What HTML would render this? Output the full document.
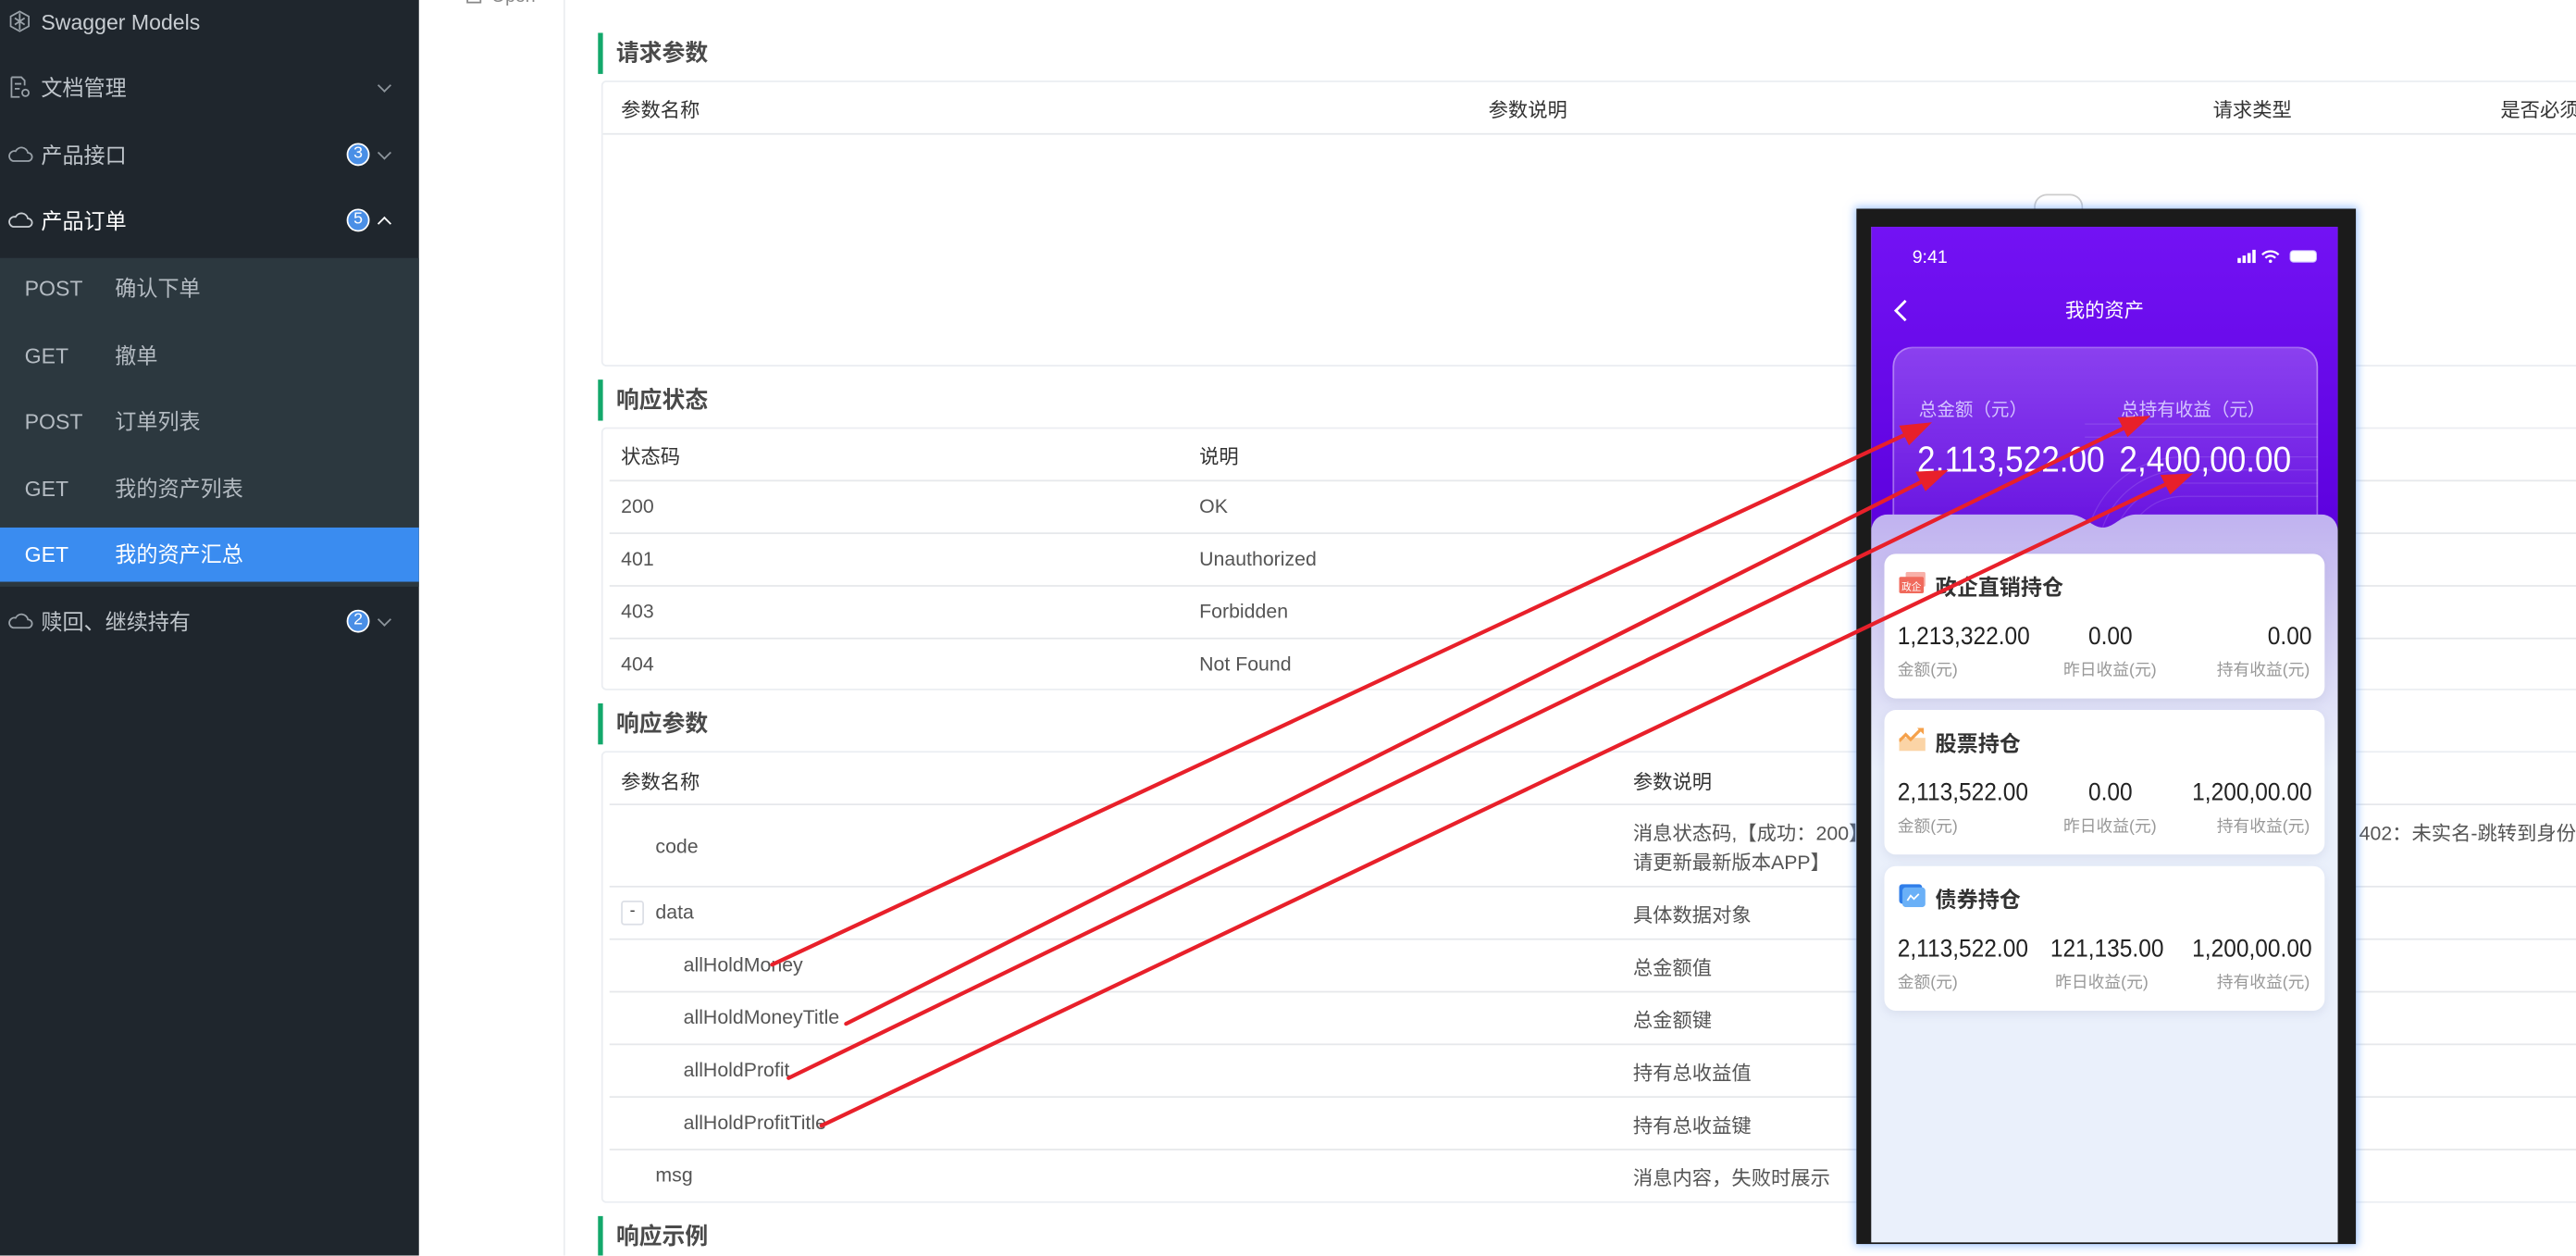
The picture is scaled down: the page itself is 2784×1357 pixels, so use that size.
<!DOCTYPE html>
<html><head><meta charset="utf-8"><style>
*{margin:0;padding:0;box-sizing:border-box}
html,body{width:2784px;height:1356px;overflow:hidden;background:#fff}
#w{position:absolute;left:0;top:0;width:1568px;height:764px;transform:scale(1.77551);transform-origin:0 0;overflow:hidden;font-family:"Liberation Sans","Noto Sans CJK SC",sans-serif;color:#555}
.a{position:absolute;white-space:nowrap}
.sb{position:absolute;left:0;top:0;width:255px;height:764px;background:#1f262d}
.sub{position:absolute;left:0;top:157px;width:255px;height:200px;background:#2c383f}
.mi{position:absolute;left:25px;font-size:13px;color:#bfc5cb;line-height:16px;margin-top:1px}
.m{position:absolute;left:15px;font-size:13px;color:#b4bbc2;line-height:16px;margin-top:1px}
.n{position:absolute;left:70px;font-size:13px;color:#b4bbc2;line-height:16px;margin-top:1px}
.badge{position:absolute;left:211px;width:14px;height:14px;border-radius:50%;background:#4a8fe6;border:1px solid #fff;color:#fff;font-size:10px;text-align:center;line-height:12px}
.chev{position:absolute;left:231px;width:6px;height:6px;border-right:1.3px solid #8d959c;border-bottom:1.3px solid #8d959c;transform:rotate(45deg)}
.ttl{position:absolute;left:364px;height:25px;border-left:3px solid #13a86b;padding-left:8px;font-size:14px;font-weight:bold;color:#4a4a4a;line-height:25px}
.tb{position:absolute;left:366px;width:1210px;border:1px solid #ebeef2;border-radius:3px;background:#fff}
.hl{position:absolute;left:371px;width:1200px;height:1px;background:#e6e8eb}
.t{position:absolute;font-size:12px;color:#555;white-space:nowrap}
.th{position:absolute;font-size:12px;color:#333;white-space:nowrap}
.card{position:absolute;left:1147px;width:268px;height:88px;background:#fff;border-radius:7px;box-shadow:0 2px 6px rgba(120,130,170,.15)}
.ct{position:absolute;left:31px;top:10px;font-size:13px;font-weight:bold;color:#333}
.v{position:absolute;top:42px;font-size:15px;color:#222;font-family:"Liberation Sans Narrow","Liberation Sans",sans-serif;transform:scaleX(.92)}
.l{position:absolute;top:62px;font-size:10px;color:#999}
</style></head><body><div id="w">

<div class="sb"></div>
<div class="sub"></div>
<div class="a" style="left:0;top:321px;width:255px;height:33px;background:#3a8cf0"></div>
<svg class="a" style="left:5px;top:6px" width="14" height="14" viewBox="0 0 14 14" fill="none" stroke="#9aa2a9" stroke-width="1"><polygon points="7,1 12.5,4 12.5,10 7,13 1.5,10 1.5,4"/><path d="M4 5l6 4M4 9l6-4M7 2v10"/></svg>
<div class="mi" style="top:5px;color:#c9ced3">Swagger Models</div>
<svg class="a" style="left:5px;top:46px" width="14" height="14" viewBox="0 0 14 14" fill="none" stroke="#9aa2a9" stroke-width="1"><path d="M2 1h6l2 2v3M2 1v12h5"/><path d="M4 5h4M4 8h3"/><circle cx="10.5" cy="10.5" r="2"/></svg>
<div class="mi" style="top:45px">文档管理</div>
<div class="chev" style="top:49px"></div>
<svg class="a" style="left:4px;top:88px" width="16" height="12" viewBox="0 0 16 12" fill="none" stroke="#9aa2a9" stroke-width="1"><path d="M4 10h9a2.5 2.5 0 0 0 0-5 4 4 0 0 0-7.5-1A3 3 0 0 0 4 10z"/></svg>
<div class="mi" style="top:86px">产品接口</div>
<div class="badge" style="top:87px">3</div>
<div class="chev" style="top:90px"></div>
<svg class="a" style="left:4px;top:128px" width="16" height="12" viewBox="0 0 16 12" fill="none" stroke="#c9ced3" stroke-width="1"><path d="M4 10h9a2.5 2.5 0 0 0 0-5 4 4 0 0 0-7.5-1A3 3 0 0 0 4 10z"/></svg>
<div class="mi" style="top:126px;color:#fff">产品订单</div>
<div class="badge" style="top:127px">5</div>
<div class="chev" style="top:133px;border-color:#fff;transform:rotate(225deg)"></div>
<div class="m" style="top:167px">POST</div><div class="n" style="top:167px">确认下单</div>
<div class="m" style="top:208px">GET</div><div class="n" style="top:208px">撤单</div>
<div class="m" style="top:248px">POST</div><div class="n" style="top:248px">订单列表</div>
<div class="m" style="top:289px">GET</div><div class="n" style="top:289px">我的资产列表</div>
<div class="m" style="top:329px;color:#fff">GET</div><div class="n" style="top:329px;color:#fff">我的资产汇总</div>
<svg class="a" style="left:4px;top:372px" width="16" height="12" viewBox="0 0 16 12" fill="none" stroke="#9aa2a9" stroke-width="1"><path d="M4 10h9a2.5 2.5 0 0 0 0-5 4 4 0 0 0-7.5-1A3 3 0 0 0 4 10z"/></svg>
<div class="mi" style="top:370px">赎回、继续持有</div>
<div class="badge" style="top:371px">2</div>
<div class="chev" style="top:374px"></div>

<div class="a" style="left:256px;top:0;width:88px;height:764px;border-right:1px solid #eceef0;background:#fff"></div>
<div class="a" style="left:284px;top:-8px;width:9px;height:10px;border:1px solid #888"></div>
<div class="a" style="left:299px;top:-8px;font-size:11px;color:#888">Open</div>

<div class="ttl" style="top:20px">请求参数</div>
<div class="tb" style="top:49px;height:174px"></div>
<div class="a" style="left:367px;top:81px;width:1209px;height:1px;background:#e6e8eb"></div>
<div class="th" style="left:378px;top:58px">参数名称</div>
<div class="th" style="left:906px;top:58px">参数说明</div>
<div class="th" style="left:1347px;top:58px">请求类型</div>
<div class="th" style="left:1522px;top:58px">是否必须</div>

<div class="ttl" style="top:231px">响应状态</div>
<div class="tb" style="top:260px;height:160px"></div>
<div class="hl" style="top:292px"></div><div class="hl" style="top:324px"></div><div class="hl" style="top:356px"></div><div class="hl" style="top:388px"></div>
<div class="th" style="left:378px;top:269px">状态码</div><div class="th" style="left:730px;top:269px">说明</div>
<div class="t" style="left:378px;top:301px">200</div><div class="t" style="left:730px;top:301px">OK</div>
<div class="t" style="left:378px;top:333px">401</div><div class="t" style="left:730px;top:333px">Unauthorized</div>
<div class="t" style="left:378px;top:365px">403</div><div class="t" style="left:730px;top:365px">Forbidden</div>
<div class="t" style="left:378px;top:397px">404</div><div class="t" style="left:730px;top:397px">Not Found</div>

<div class="ttl" style="top:428px">响应参数</div>
<div class="tb" style="top:457px;height:275px"></div>
<div class="hl" style="top:489px"></div><div class="hl" style="top:539px"></div><div class="hl" style="top:571px"></div><div class="hl" style="top:603px"></div><div class="hl" style="top:635px"></div><div class="hl" style="top:667px"></div><div class="hl" style="top:699px"></div>
<div class="th" style="left:378px;top:467px">参数名称</div><div class="th" style="left:994px;top:467px">参数说明</div>
<div class="t" style="left:399px;top:508px">code</div>
<div class="t" style="left:994px;top:498px">消息状态码,【成功：200】，【401：未登录】</div>
<div class="t" style="left:994px;top:516px">请更新最新版本APP】</div>
<div class="t" style="left:1436px;top:498px">402：未实名-跳转到身份证认证</div>
<div class="a" style="left:378px;top:548px;width:14px;height:15px;border:1px solid #dcdfe6;border-radius:2px;font-size:10px;text-align:center;line-height:12px;color:#333">-</div>
<div class="t" style="left:399px;top:548px">data</div><div class="t" style="left:994px;top:548px">具体数据对象</div>
<div class="t" style="left:416px;top:580px">allHoldMoney</div><div class="t" style="left:994px;top:580px">总金额值</div>
<div class="t" style="left:416px;top:612px">allHoldMoneyTitle</div><div class="t" style="left:994px;top:612px">总金额键</div>
<div class="t" style="left:416px;top:644px">allHoldProfit</div><div class="t" style="left:994px;top:644px">持有总收益值</div>
<div class="t" style="left:416px;top:676px">allHoldProfitTitle</div><div class="t" style="left:994px;top:676px">持有总收益键</div>
<div class="t" style="left:399px;top:708px">msg</div><div class="t" style="left:994px;top:708px">消息内容，失败时展示</div>
<div class="ttl" style="top:740px">响应示例</div>

<div class="a" style="left:1238px;top:118px;width:30px;height:10px;border:1px solid #ccc;border-bottom:none;border-radius:8px 8px 0 0"></div>
<div class="a" style="left:1130px;top:127px;width:304px;height:630px;background:#1b1b1b;box-shadow:0 0 5px 1px rgba(80,150,255,.55)"></div>
<div class="a" style="left:1139px;top:138px;width:284px;height:618px;background:#eaf0fb;overflow:hidden">
  <div class="a" style="left:0;top:0;width:284px;height:200px;background:linear-gradient(#7312f4,#5b00dc)"></div>
  <div class="a" style="left:25px;top:13px;font-size:11px;color:#fff">9:41</div>
  <svg class="a" style="left:222px;top:13px" width="52" height="10" viewBox="0 0 52 10"><rect x="1" y="6" width="2" height="3" fill="#fff"/><rect x="4" y="4.5" width="2" height="4.5" fill="#fff"/><rect x="7" y="3" width="2" height="6" fill="#fff"/><rect x="10" y="1" width="2" height="8" fill="#fff"/><path d="M16 4a7 7 0 0 1 10 0M18 6a4 4 0 0 1 6 0" stroke="#fff" stroke-width="1.3" fill="none"/><circle cx="21" cy="8" r="1" fill="#fff"/><rect x="33" y="1.5" width="16" height="7" rx="2" fill="#fff" stroke="#c9b6ff" stroke-width=".6"/></svg>
  <svg class="a" style="left:13px;top:44px" width="10" height="14" viewBox="0 0 10 14"><path d="M8 1L2 7l6 6" stroke="#fff" stroke-width="1.6" fill="none"/></svg>
  <div class="a" style="left:118px;top:42px;font-size:12px;color:#fff">我的资产</div>
  <div class="a" style="left:13px;top:73px;width:259px;height:130px;border-radius:12px;border:1px solid rgba(255,255,255,.35);background:linear-gradient(rgba(255,255,255,.22),rgba(255,255,255,.05))"></div>
  <svg class="a" style="left:130px;top:100px" width="142" height="100" viewBox="0 0 142 100" fill="none" stroke="rgba(255,255,255,.12)" stroke-width=".7"><path d="M0 100a60 60 0 0 1 60-60h82"/><path d="M8 100a52 52 0 0 1 52-52h82"/><path d="M16 100a44 44 0 0 1 44-44h82"/><path d="M24 100a36 36 0 0 1 36-36h82"/><path d="M0 20h142M0 28h142"/></svg>
  <div class="a" style="left:29px;top:103px;font-size:11px;color:#d4c3ff">总金额（元）</div>
  <div class="a" style="left:152px;top:103px;font-size:11px;color:#d4c3ff">总持有收益（元）</div>
  <div class="a" style="left:28px;top:129px;font-size:22px;color:#fff;font-family:'Liberation Sans Narrow','Liberation Sans',sans-serif;transform:scaleX(.9);transform-origin:0 0">2,113,522.00</div>
  <div class="a" style="left:151px;top:129px;font-size:22px;color:#fff;font-family:'Liberation Sans Narrow','Liberation Sans',sans-serif;transform:scaleX(.9);transform-origin:0 0">2,400,00.00</div>
  <svg class="a" style="left:0;top:175px" width="284" height="443" viewBox="0 0 284 443"><defs><linearGradient id="g" x1="0" y1="0" x2="0" y2="1"><stop offset="0" stop-color="#c0b2f0"/><stop offset=".15" stop-color="#d2cdf2"/><stop offset=".35" stop-color="#eaf0fb"/><stop offset="1" stop-color="#eaf0fb"/></linearGradient></defs><path d="M0 10a10 10 0 0 1 10-10h110c10 0 14 8 21 8s11-8 21-8h112a10 10 0 0 1 10 10v433H0z" fill="url(#g)"/></svg>
</div>

<div class="card" style="top:337px">
  <svg class="a" style="left:9px;top:11px" width="17" height="14" viewBox="0 0 17 14"><rect x="4" y="0" width="12" height="9" rx="1" fill="#f8b0a8"/><rect x="0" y="3" width="15" height="10" rx="1" fill="#f06a5c"/><text x="1.5" y="11" font-size="6" fill="#fff" font-family="Noto Sans CJK SC">政企</text></svg>
  <div class="ct">政企直销持仓</div>
  <div class="v" style="left:8px;transform-origin:0 0">1,213,322.00</div>
  <div class="v" style="left:123px">0.00</div>
  <div class="v" style="right:8px;transform-origin:100% 0">0.00</div>
  <div class="l" style="left:8px">金额(元)</div><div class="l" style="left:109px">昨日收益(元)</div><div class="l" style="right:9px">持有收益(元)</div>
</div>
<div class="card" style="top:432px">
  <svg class="a" style="left:9px;top:11px" width="16" height="14" viewBox="0 0 16 14"><rect x="0" y="6" width="16" height="8" fill="#fbd4a6"/><path d="M0 8l4-4 3 3 6-6" stroke="#f5a14b" stroke-width="1.8" fill="none"/><path d="M11 0h4v4z" fill="#f5a14b"/></svg>
  <div class="ct">股票持仓</div>
  <div class="v" style="left:8px;transform-origin:0 0">2,113,522.00</div>
  <div class="v" style="left:123px">0.00</div>
  <div class="v" style="right:8px;transform-origin:100% 0">1,200,00.00</div>
  <div class="l" style="left:8px">金额(元)</div><div class="l" style="left:109px">昨日收益(元)</div><div class="l" style="right:9px">持有收益(元)</div>
</div>
<div class="card" style="top:527px">
  <svg class="a" style="left:9px;top:11px" width="16" height="14" viewBox="0 0 16 14"><rect x="0" y="0" width="14" height="12" rx="2" fill="#2f7de9"/><rect x="2" y="2" width="14" height="12" rx="2" fill="#6ab0f7"/><path d="M5 10l2-3 2 2 3-3" stroke="#fff" stroke-width="1" fill="none"/></svg>
  <div class="ct">债券持仓</div>
  <div class="v" style="left:8px;transform-origin:0 0">2,113,522.00</div>
  <div class="v" style="left:98px">121,135.00</div>
  <div class="v" style="right:8px;transform-origin:100% 0">1,200,00.00</div>
  <div class="l" style="left:8px">金额(元)</div><div class="l" style="left:104px">昨日收益(元)</div><div class="l" style="right:9px">持有收益(元)</div>
</div>

<svg class="a" style="left:0;top:0" width="1568" height="764" viewBox="0 0 1568 764">
<g stroke="#e8202a" stroke-width="2.4" fill="none" stroke-linecap="round">
<path d="M470 587L1165 262"/><path d="M515 623L1176 290"/><path d="M480 656L1298 258"/><path d="M500 685L1324 292"/>
</g>
<g fill="#e8202a">
<polygon points="1176,257 1156,259 1162,271"/>
<polygon points="1186,286 1166,287 1172,299"/>
<polygon points="1309,253 1289,254 1295,266"/>
<polygon points="1335,288 1315,289 1321,301"/>
</g>
</svg>
</div></body></html>
